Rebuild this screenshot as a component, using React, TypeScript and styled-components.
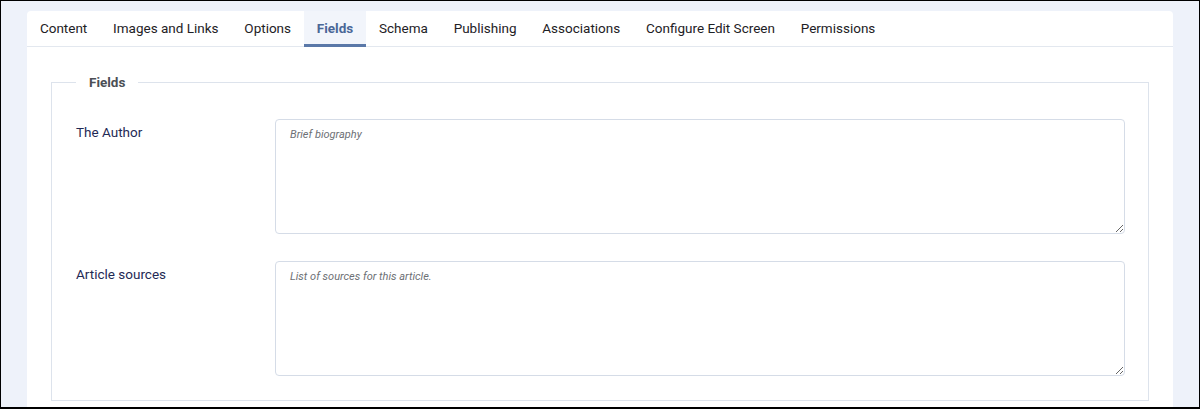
import styled, { createGlobalStyle } from "styled-components"

const GlobalStyle = createGlobalStyle`
  html, body {
    margin: 0;
    padding: 0;
    height: 100%;
  }
  body {
    font-family: Roboto, "Noto Sans", "Liberation Sans", sans-serif;
    overflow: hidden;
  }
  #root {
    height: 100%;
  }
`

const Page = styled.div`
  box-sizing: border-box;
  height: 409px;
  border: 1px solid #000;
  border-bottom-width: 2px;
  background: #eef2fa;
  padding: 10px 26px 0;
  overflow: hidden;
`

const Card = styled.div`
  background: #fff;
  border-radius: 4px 4px 0 0;
  height: 100%;
`

const TabList = styled.div`
  display: flex;
  border-bottom: 1px solid #e3e8ef;
`

const Tab = styled.div<{ $active?: boolean }>`
  box-sizing: border-box;
  height: 36px;
  line-height: 34px;
  margin-bottom: -1px;
  padding: 0 12.9px;
  font-size: 13.5px;
  white-space: nowrap;
  color: ${({ $active }) => ($active ? "#4a6797" : "#1e2125")};
  font-weight: ${({ $active }) => ($active ? 700 : 400)};
  background: ${({ $active }) => ($active ? "#f2f5fb" : "transparent")};
  border-bottom: 3px solid ${({ $active }) => ($active ? "#5a78a8" : "transparent")};
`

const Body = styled.div`
  padding: 25px 24px 0;
`

const FieldSet = styled.fieldset`
  margin: 0;
  min-width: 0;
  border: 1px solid #dde3ec;
  padding: 27px 23px 24px 24px;
`

const Legend = styled.legend`
  padding: 0 13px;
  font-size: 13.5px;
  font-weight: 700;
  line-height: 20px;
  color: #4b4f55;
`

const Rows = styled.div`
  display: flex;
  flex-direction: column;
  gap: 27px;
`

const Row = styled.div`
  display: grid;
  grid-template-columns: 199px 1fr;
  align-items: start;
`

const Label = styled.label`
  padding-top: 5px;
  font-size: 13.5px;
  line-height: 17px;
  color: #1f2a55;
`

const TextArea = styled.textarea`
  display: block;
  box-sizing: border-box;
  width: 100%;
  height: 115px;
  margin: 0;
  padding: 8px 14px;
  border: 1px solid #d5dce7;
  border-radius: 4px;
  font-family: Roboto, "Noto Sans", "Liberation Sans", sans-serif;
  font-size: 11px;
  line-height: 14px;
  resize: vertical;
  outline: none;
  &::placeholder {
    color: #6d7075;
    font-style: italic;
  }
`

const tabs = [
  "Content",
  "Images and Links",
  "Options",
  "Fields",
  "Schema",
  "Publishing",
  "Associations",
  "Configure Edit Screen",
  "Permissions",
]

const fields = [
  { label: "The Author", placeholder: "Brief biography" },
  { label: "Article sources", placeholder: "List of sources for this article." },
]

function App() {
  return (
    <>
      <GlobalStyle />
      <Page>
        <Card>
          <TabList>
            {tabs.map((t) => (
              <Tab key={t} $active={t === "Fields"}>
                {t}
              </Tab>
            ))}
          </TabList>
          <Body>
            <FieldSet>
              <Legend>Fields</Legend>
              <Rows>
                {fields.map((f) => (
                  <Row key={f.label}>
                    <Label>{f.label}</Label>
                    <TextArea placeholder={f.placeholder} />
                  </Row>
                ))}
              </Rows>
            </FieldSet>
          </Body>
        </Card>
      </Page>
    </>
  )
}

export default App
